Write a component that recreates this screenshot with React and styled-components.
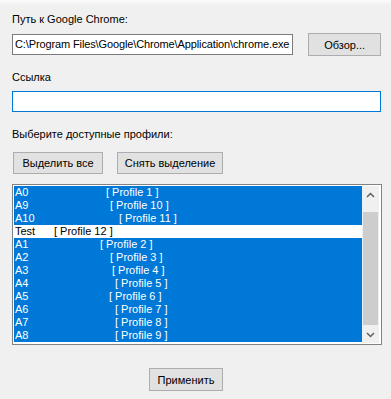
import React from "react";
import styled, { createGlobalStyle } from "styled-components";

const Global = createGlobalStyle`
  html, body { margin: 0; padding: 0; background: #f0f0f0; }
  body { font-family: "Liberation Sans", Arial, sans-serif; font-size: 11px; color: #000; }
`;

const Form = styled.div`
  width: 391px;
  height: 399px;
  box-sizing: border-box;
  padding: 13px 10px 0 12px;
  background: linear-gradient(#fbfbfb 0px, #f0f0f0 6px);
  display: flex;
  flex-direction: column;
`;

const Label = styled.div`
  line-height: 13px;
  height: 13px;
  margin-top: ${(p) => p.$mt || 0}px;
  white-space: nowrap;
`;

const Row = styled.div`
  display: flex;
  align-items: center;
  margin-top: ${(p) => p.$mt || 0}px;
`;

const TextBox = styled.div`
  box-sizing: border-box;
  height: 21px;
  width: ${(p) => p.$w}px;
  background: #fff;
  border: 1px solid ${(p) => (p.$focused ? "#0078d7" : "#7a7a7a")};
  padding: 0 2px;
  line-height: 19px;
  white-space: nowrap;
  overflow: hidden;
  letter-spacing: -0.12px;
`;

const Button = styled.div`
  box-sizing: border-box;
  width: ${(p) => p.$w}px;
  height: ${(p) => p.$h || 23}px;
  margin-left: ${(p) => p.$ml || 0}px;
  background: #e1e1e1;
  border: 1px solid #adadad;
  display: flex;
  align-items: center;
  justify-content: center;
  white-space: nowrap;
`;

const ListBox = styled.div`
  box-sizing: border-box;
  margin-top: 10px;
  width: 370px;
  height: 161px;
  border: 1px solid #828282;
  background: #fff;
  padding: 1px;
  display: flex;
`;

const Items = styled.div`
  flex: 1;
  overflow: hidden;
  display: flex;
  flex-direction: column;
`;

const Item = styled.div`
  height: 13px;
  line-height: 13px;
  flex-shrink: 0;
  padding-left: 1px;
  display: grid;
  grid-template-columns: ${(p) => p.$at}px auto;
  white-space: nowrap;
  background: ${(p) => (p.$sel ? "#0078d7" : "#fff")};
  color: ${(p) => (p.$sel ? "#fff" : "#000")};
`;

const ScrollBar = styled.div`
  width: 17px;
  margin-right: 1px;
  background: #f0f0f0;
  display: flex;
  flex-direction: column;
`;

const Arrow = styled.div`
  height: 17px;
  display: flex;
  align-items: center;
  justify-content: center;
`;

const Track = styled.div`
  flex: 1;
  display: flex;
  flex-direction: column;
  padding: 9px 0 1px;
`;

const Thumb = styled.div`
  flex: 1;
  margin: 0 1px;
  background: #cdcdcd;
`;

const items = [
  ["A0", "[ Profile 1 ]", 91, true],
  ["A9", "[ Profile 10 ]", 95, true],
  ["A10", "[ Profile 11 ]", 104, true],
  ["Test", "[ Profile 12 ]", 39, false],
  ["A1", "[ Profile 2 ]", 85, true],
  ["A2", "[ Profile 3 ]", 95, true],
  ["A3", "[ Profile 4 ]", 97, true],
  ["A4", "[ Profile 5 ]", 100, true],
  ["A5", "[ Profile 6 ]", 94, true],
  ["A6", "[ Profile 7 ]", 100, true],
  ["A7", "[ Profile 8 ]", 100, true],
  ["A8", "[ Profile 9 ]", 100, true],
];

const Chevron = ({ up }) => (
  <svg width="9" height="6" viewBox="0 0 9 6">
    <path
      d={up ? "M1 5 L4.5 1.5 L8 5" : "M1 1 L4.5 4.5 L8 1"}
      fill="none"
      stroke="#606060"
      strokeWidth="1.5"
    />
  </svg>
);

export default function App() {
  return (
    <>
      <Global />
      <Form>
        <Label>Путь к Google Chrome:</Label>
        <Row $mt={7}>
          <TextBox $w={282}>C:\Program Files\Google\Chrome\Application\chrome.exe</TextBox>
          <Button $w={73} $ml={15}>Обзор...</Button>
        </Row>
        <Label $mt={15}>Ссылка</Label>
        <Row $mt={7}>
          <TextBox $w={370} $focused />
        </Row>
        <Label $mt={16}>Выберите доступные профили:</Label>
        <Row $mt={11}>
          <Button $w={90} $h={22} $ml={1}>Выделить все</Button>
          <Button $w={106} $h={22} $ml={14}>Снять выделение</Button>
        </Row>
        <ListBox>
          <Items>
            {items.map(([name, prof, at, sel]) => (
              <Item key={name} $at={at} $sel={sel}>
                <span>{name}</span>
                <span>{prof}</span>
              </Item>
            ))}
          </Items>
          <ScrollBar>
            <Arrow>
              <Chevron up />
            </Arrow>
            <Track>
              <Thumb />
            </Track>
            <Arrow>
              <Chevron />
            </Arrow>
          </ScrollBar>
        </ListBox>
        <Row $mt={23}>
          <Button $w={74} $ml={137}>Применить</Button>
        </Row>
      </Form>
    </>
  );
}
